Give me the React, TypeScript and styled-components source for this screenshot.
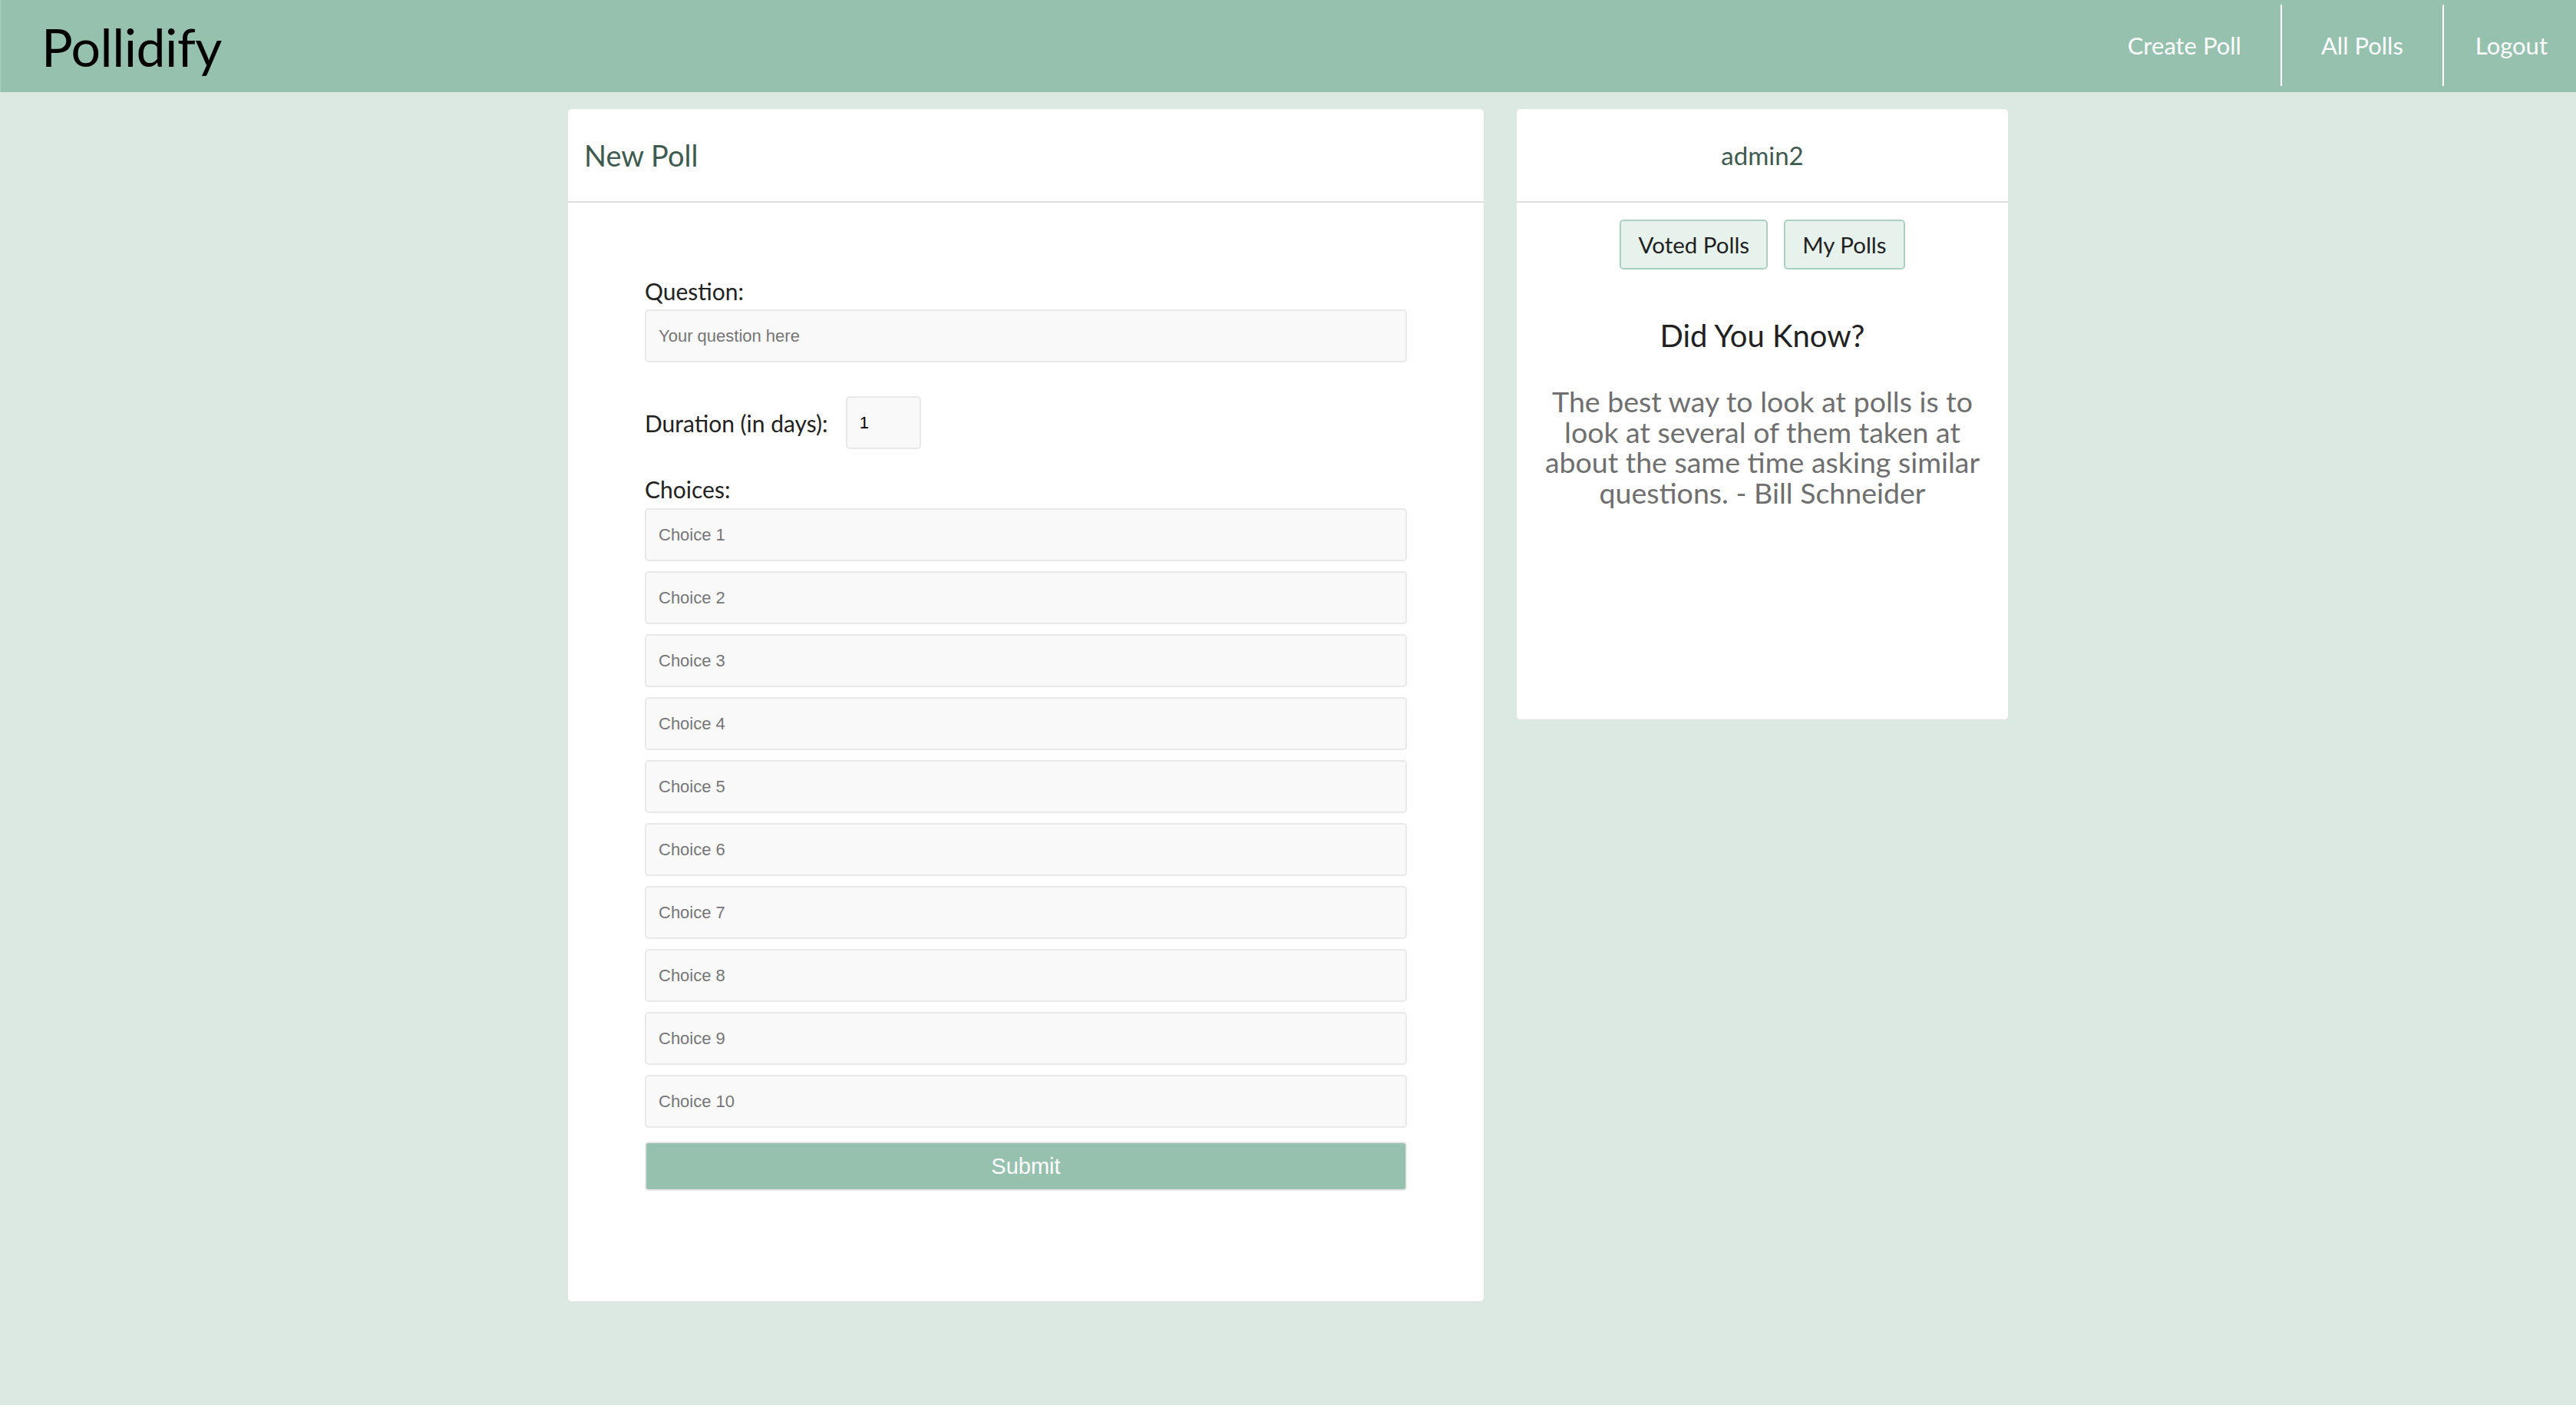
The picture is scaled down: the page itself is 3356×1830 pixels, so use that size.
import styled, { createGlobalStyle } from 'styled-components';

const GlobalStyle = createGlobalStyle`
  html, body {
    margin: 0;
    padding: 0;
  }
  body {
    background-color: #dce9e2;
    font-family: Lato, "Open Sans", sans-serif;
    min-height: 100vh;
  }
  * {
    box-sizing: border-box;
  }
`;

const Navbar = styled.nav`
  display: flex;
  align-items: center;
  height: 120px;
  padding-left: 53px;
  background-color: #95c1ae;
  border-left: 1px solid #acd0c0;
`;

const Logo = styled.div`
  font-size: 68px;
  color: #000;
  letter-spacing: -0.5px;
`;

const NavLinks = styled.div`
  display: flex;
  align-self: stretch;
  margin-left: auto;
  padding: 6px 0 8px;
`;

const NavLink = styled.a`
  display: flex;
  align-items: center;
  padding: 0 51px;
  font-size: 31px;
  color: #fff;
  text-decoration: none;
  & + & {
    border-left: 2px solid #fff;
  }
  &:last-child {
    padding: 0 37px 0 41px;
  }
`;

const Main = styled.main`
  display: flex;
  justify-content: center;
  align-items: flex-start;
  gap: 43px;
  padding-top: 22px;
  padding-bottom: 134px;
`;

const Card = styled.section<{ $width: number; $height?: number }>`
  display: flex;
  flex-direction: column;
  width: ${(p) => p.$width}px;
  height: ${(p) => (p.$height ? `${p.$height}px` : 'auto')};
  background: #fff;
  border-radius: 5px;
  border-bottom: 1px solid #dedede;
`;

const CardHeader = styled.header<{ $center?: boolean }>`
  display: flex;
  align-items: center;
  justify-content: ${(p) => (p.$center ? 'center' : 'flex-start')};
  height: 122px;
  padding: 0 21px;
  border-bottom: 2px solid #dedede;
  color: #3f5a4f;
`;

const CardTitle = styled.h2<{ $size: number }>`
  margin: 0;
  font-size: ${(p) => p.$size}px;
  font-weight: 400;
`;

const FormBody = styled.form`
  display: flex;
  flex-direction: column;
  padding: 97px 100px 144px;
`;

const Label = styled.label`
  display: block;
  font-size: 30px;
  line-height: 36px;
  color: #222;
`;

const TextInput = styled.input<{ $width?: number }>`
  width: ${(p) => (p.$width ? `${p.$width}px` : '100%')};
  height: 69px;
  padding: 0 16px;
  background: #f9f9f9;
  border: 2px solid #e9e9e9;
  border-radius: 5px;
  font-family: "Liberation Sans", Arial, sans-serif;
  font-size: 22px;
  color: #000;
  outline: none;
  &::placeholder {
    color: #767676;
  }
`;

const Field = styled.div<{ $gap: number }>`
  display: flex;
  flex-direction: column;
  gap: ${(p) => p.$gap}px;
`;

const DurationRow = styled.div`
  display: flex;
  align-items: center;
  gap: 23px;
  margin: 44px 0 34px;
`;

const ChoiceList = styled.div`
  display: flex;
  flex-direction: column;
  gap: 13px;
`;

const SubmitButton = styled.button`
  height: 64px;
  margin-top: 18px;
  background: #96c1ae;
  border: 2px solid #e6e6e6;
  border-radius: 5px;
  font-family: "Liberation Sans", Arial, sans-serif;
  font-size: 29px;
  color: #fff;
  cursor: pointer;
`;

const SideBody = styled.div`
  display: flex;
  flex-direction: column;
  align-items: center;
  padding: 22px 18px 0;
  text-align: center;
`;

const ButtonRow = styled.div`
  display: flex;
  gap: 21px;
`;

const TabButton = styled.button`
  height: 65px;
  padding: 0 22px;
  background: #e8f2ed;
  border: 2px solid #acd0c0;
  border-radius: 5px;
  font-family: Lato, sans-serif;
  font-size: 29.5px;
  color: #222;
  cursor: pointer;
`;

const FactTitle = styled.h3`
  margin: 62px 0 0;
  font-size: 40px;
  line-height: 48px;
  font-weight: 400;
  color: #222;
`;

const FactText = styled.p`
  margin: 42px 0 0;
  font-size: 37.5px;
  line-height: 39.5px;
  color: #6f6f6f;
`;

const choices = Array.from({ length: 10 }, (_, i) => `Choice ${i + 1}`);

function App() {
  return (
    <>
      <GlobalStyle />
      <Navbar>
        <Logo>Pollidify</Logo>
        <NavLinks>
          <NavLink href="#">Create Poll</NavLink>
          <NavLink href="#">All Polls</NavLink>
          <NavLink href="#">Logout</NavLink>
        </NavLinks>
      </Navbar>
      <Main>
        <Card $width={1193}>
          <CardHeader>
            <CardTitle $size={38}>New Poll</CardTitle>
          </CardHeader>
          <FormBody onSubmit={(e) => e.preventDefault()}>
            <Field $gap={6}>
              <Label>Question:</Label>
              <TextInput placeholder="Your question here" />
            </Field>
            <DurationRow>
              <Label>Duration (in days):</Label>
              <TextInput $width={98} defaultValue="1" />
            </DurationRow>
            <Field $gap={7}>
              <Label>Choices:</Label>
              <ChoiceList>
                {choices.map((c) => (
                  <TextInput key={c} placeholder={c} />
                ))}
              </ChoiceList>
            </Field>
            <SubmitButton type="submit">Submit</SubmitButton>
          </FormBody>
        </Card>
        <Card $width={640} $height={796}>
          <CardHeader $center>
            <CardTitle $size={33}>admin2</CardTitle>
          </CardHeader>
          <SideBody>
            <ButtonRow>
              <TabButton>Voted Polls</TabButton>
              <TabButton>My Polls</TabButton>
            </ButtonRow>
            <FactTitle>Did You Know?</FactTitle>
            <FactText>
              The best way to look at polls is to look at several of them taken
              at about the same time asking similar questions. - Bill Schneider
            </FactText>
          </SideBody>
        </Card>
      </Main>
    </>
  );
}

export default App;
